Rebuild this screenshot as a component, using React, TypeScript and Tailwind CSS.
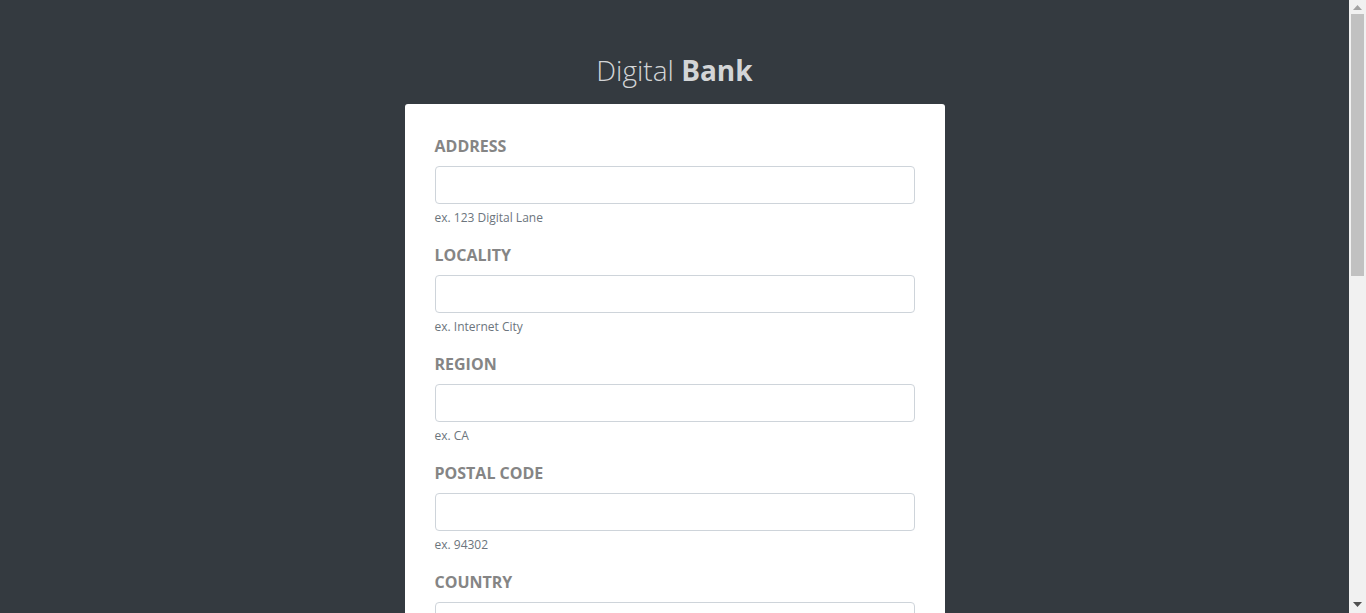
const fields = [
  { label: 'Address', hint: 'ex. 123 Digital Lane' },
  { label: 'Locality', hint: 'ex. Internet City' },
  { label: 'Region', hint: 'ex. CA' },
  { label: 'Postal Code', hint: 'ex. 94302' },
  { label: 'Country', hint: 'ex. US' },
  { label: 'Home Phone', hint: 'ex. (547) 392-5436' },
  { label: 'Mobile Phone', hint: 'ex. (547) 392-5436' },
  { label: 'Work Phone', hint: 'ex. (547) 392-5436' },
]

function FakeScrollbar() {
  // the reference shows the browser's classic scrollbar
  return (
    <div className="fixed top-0 right-0 h-screen w-[17px] bg-[#f1f1f1] flex flex-col items-center">
      <div className="h-[14px] w-full flex items-center justify-center">
        <svg width="9" height="5" viewBox="0 0 9 5">
          <path d="M0 5 L4.5 0 L9 5 Z" fill="#a3a3a3" />
        </svg>
      </div>
      <div className="w-[13px] h-[262px] bg-[#c1c1c1]" />
      <div className="flex-1" />
      <div className="h-[17px] w-full flex items-center justify-center">
        <svg width="9" height="5" viewBox="0 0 9 5">
          <path d="M0 0 L9 0 L4.5 5 Z" fill="#505050" />
        </svg>
      </div>
    </div>
  )
}

export default function App() {
  return (
    <div
      className="min-h-screen bg-[#343a40] pt-[51px] pb-[120px] pr-[17px]"
      style={{ fontFamily: '"Open Sans", "Liberation Sans", sans-serif' }}
    >
      <h1 className="text-center text-[28px] leading-[38px] text-[#d3d5d7] mb-[15px]">
        <span className="font-light">Digital</span> <span className="font-bold">Bank</span>
      </h1>

      <div className="mx-auto w-[540px] bg-white rounded-[3px] px-[30px] pt-[30px] pb-[30px]">
        <form>
          {fields.map((f) => (
            <div key={f.label} className="mb-4">
              <label className="block text-[16px] leading-6 font-bold uppercase text-[#858585] mb-2">
                {f.label}
              </label>
              <input
                type="text"
                className="block w-full h-[38px] rounded border border-[#ced4da] px-3 text-base text-[#495057] outline-none"
              />
              <small className="block mt-[5px] text-[12px] leading-[18px] text-[#6c757d]">{f.hint}</small>
            </div>
          ))}
          <button
            type="button"
            className="mt-2 w-full h-[38px] rounded bg-[#28a745] text-white text-base font-semibold"
          >
            Submit
          </button>
        </form>
      </div>

      <FakeScrollbar />
    </div>
  )
}
